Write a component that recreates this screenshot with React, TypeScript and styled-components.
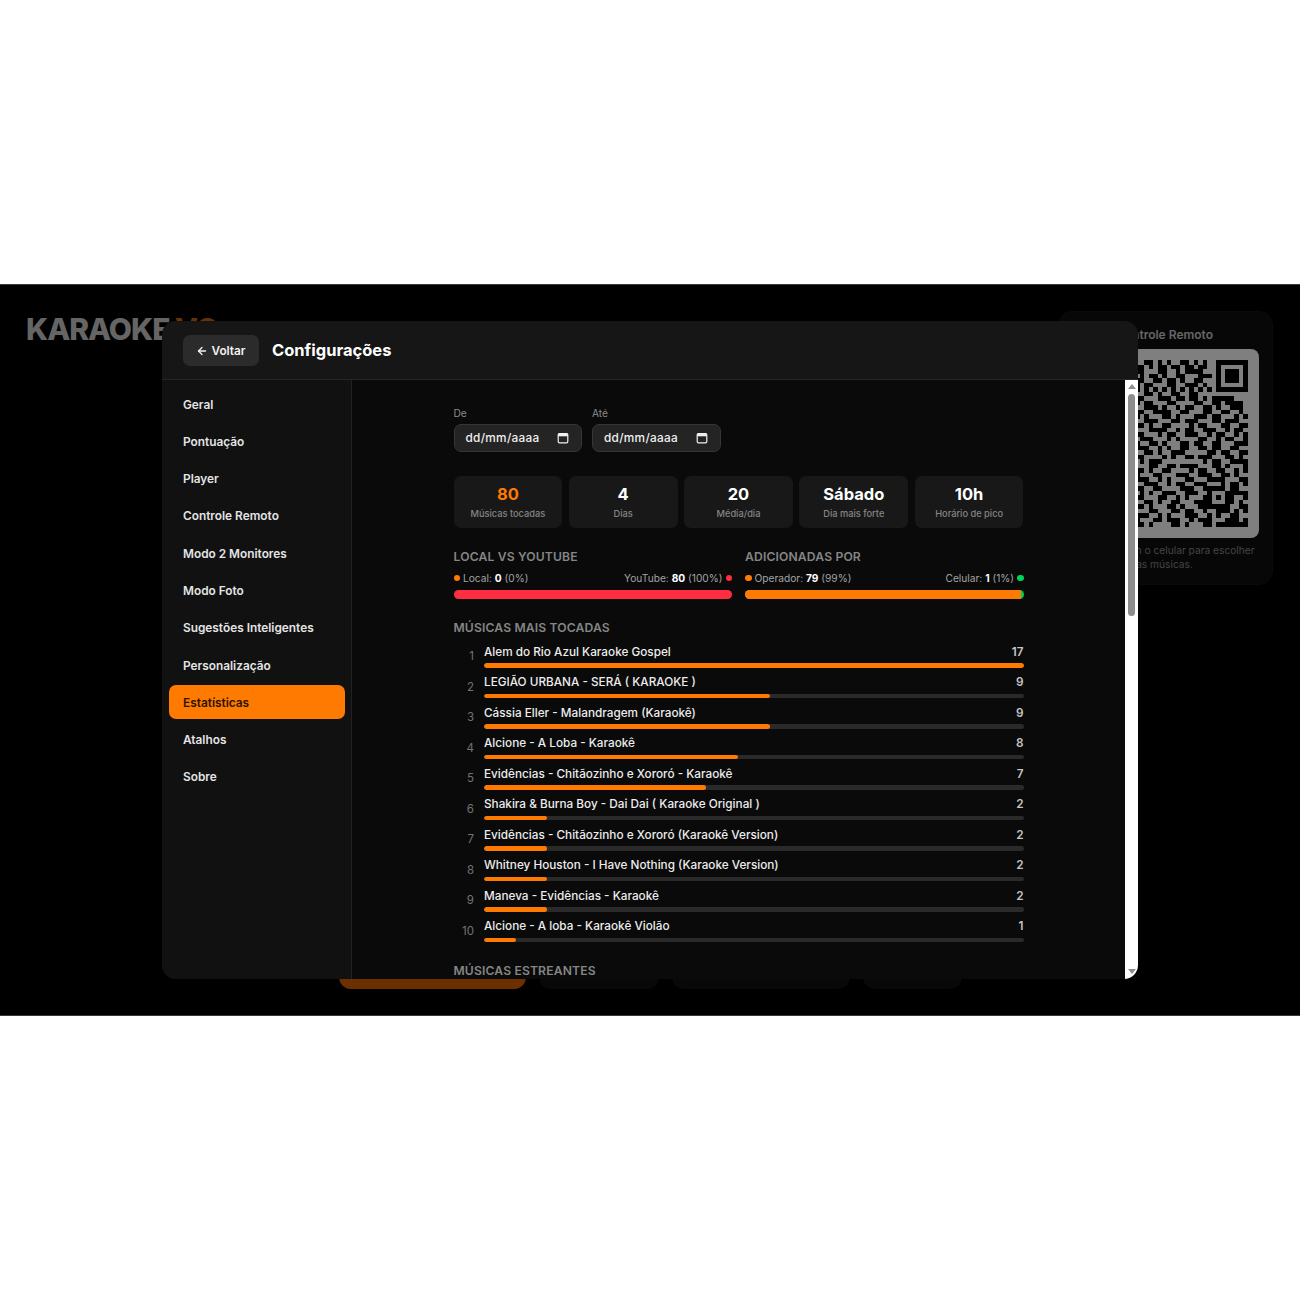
import React from "react";
import styled, { createGlobalStyle } from "styled-components";
import { ArrowLeft } from "lucide-react";

const Global = createGlobalStyle`
  * { box-sizing: border-box; }
  html, body { margin: 0; background: #fff; }
  body { font-family: Inter, "Noto Sans", sans-serif; }
`;

const Page = styled.div`
  padding-top: 284px;
  height: 1300px;
`;

const Stage = styled.main`
  position: relative;
  height: 732px;
  background: #000;
  border-top: 1px solid #3a3a3a;
  border-bottom: 1px solid #3a3a3a;
  display: flex;
  flex-direction: column;
  overflow: hidden;
  padding: 26px 27px;
`;

const TopRow = styled.div`
  display: flex;
  justify-content: space-between;
  align-items: flex-start;
`;

const Logo = styled.div`
  font-size: 30px;
  font-weight: 800;
  letter-spacing: -1px;
  line-height: 36px;
  margin-left: -1px;
  color: #cacaca;
  span { color: #d86200; }
`;

const RemotePanel = styled.aside`
  width: 215px;
  height: 274px;
  border-radius: 14px;
  background: #0e0e0e;
  border: 1px solid #141414;
  padding: 15px 14px 0 12px;
  display: flex;
  flex-direction: column;
  align-items: center;
`;

const RemoteTitle = styled.div`
  font-size: 12px;
  line-height: 15px;
  font-weight: 600;
  color: #ccc;
`;

const QrBox = styled.div`
  width: 188px;
  height: 189px;
  margin-top: 7px;
  background: #fff;
  border-radius: 8px;
  padding: 11px 11px 11px 10px;
  svg { display: block; width: 167px; height: 167px; }
`;

const RemoteCaption = styled.p`
  margin: 5px 0 0;
  font-size: 10.2px;
  line-height: 14px;
  text-align: center;
  color: #888;
  width: 188px;
`;

const BottomRow = styled.div`
  margin-top: auto;
  display: flex;
  justify-content: center;
  gap: 13px;
`;

const BottomButton = styled.div<{ $w: number; $primary?: boolean }>`
  width: ${(p) => p.$w}px;
  height: 42px;
  border-radius: 12px;
  background: ${(p) => (p.$primary ? "#d85f00" : "#111")};
`;

const Overlay = styled.div`
  position: absolute;
  inset: 0;
  background: rgba(0, 0, 0, 0.5);
  display: flex;
  align-items: center;
  justify-content: center;
`;

const Modal = styled.section`
  width: 976px;
  height: 658px;
  border-radius: 14px;
  background: #111;
  overflow: hidden;
  display: flex;
  flex-direction: column;
`;

const ModalHeader = styled.header`
  flex: 0 0 59px;
  display: flex;
  align-items: center;
  gap: 13px;
  padding: 0 21px;
  background: #161616;
  border-bottom: 1px solid #262626;
`;

const BackButton = styled.button`
  width: 76px;
  height: 31px;
  border: 0;
  border-radius: 7px;
  background: #2b2b2b;
  color: #f2f2f2;
  font: 600 11.8px Inter, sans-serif;
  display: flex;
  align-items: center;
  justify-content: center;
  gap: 3px;
  padding: 1px 0 0;
`;

const Title = styled.h1`
  margin: 0;
  font-size: 16.5px;
  font-weight: 700;
  color: #fff;
`;

const ModalBody = styled.div`
  flex: 1;
  min-height: 0;
  display: flex;
`;

const Sidebar = styled.nav`
  flex: 0 0 190px;
  padding: 7px 6px 7px 7px;
  display: flex;
  flex-direction: column;
  gap: 3.3px;
  background: #111;
  border-right: 1px solid #222;
`;

const NavItem = styled.div<{ $active?: boolean }>`
  height: 34px;
  flex: 0 0 34px;
  border-radius: 7px;
  padding: 1px 0 0 14px;
  display: flex;
  align-items: center;
  font-size: 11.85px;
  font-weight: 600;
  color: ${(p) => (p.$active ? "#2a1400" : "#e4e4e4")};
  background: ${(p) => (p.$active ? "#ff7a00" : "transparent")};
`;

const Content = styled.div`
  flex: 1;
  min-width: 0;
  overflow: hidden;
  background: #0a0a0a;
`;

const ScrollBar = styled.div`
  flex: 0 0 13px;
  background: #fff;
  display: flex;
  flex-direction: column;
  align-items: center;
  padding: 4px 0 5px;
`;

const ScrollArrow = styled.i<{ $down?: boolean }>`
  width: 0;
  height: 0;
  border-left: 4px solid transparent;
  border-right: 4px solid transparent;
  ${(p) => (p.$down ? "border-top: 5px solid #8d8d8d; margin-top: auto;" : "border-bottom: 5px solid #8d8d8d;")}
`;

const ScrollThumb = styled.div`
  width: 7.5px;
  height: 222px;
  margin-top: 5px;
  border-radius: 4px;
  background: #8d8d8d;
`;

const Inner = styled.div`
  width: 570px;
  margin: 0 auto;
  padding-top: 26.5px;
`;

const DateRow = styled.div`
  display: flex;
  gap: 10px;
`;

const DateGroup = styled.label`
  display: flex;
  flex-direction: column;
  gap: 4.5px;
`;

const DateLabel = styled.span`
  font-size: 10.2px;
  line-height: 13px;
  color: #8a8a8a;
`;

const DateField = styled.div`
  width: 128.5px;
  height: 28px;
  background: #242424;
  border: 1px solid #363636;
  border-radius: 7px;
  padding: 0 12px 0 11px;
  display: flex;
  align-items: center;
  justify-content: space-between;
  font-size: 11.8px;
  font-weight: 500;
  letter-spacing: 0.3px;
  color: #f0f0f0;
`;

const StatGrid = styled.div`
  margin-top: 23.5px;
  display: grid;
  grid-template-columns: repeat(5, 1fr);
  gap: 6.6px;
`;

const StatCard = styled.div`
  height: 52px;
  background: #181818;
  border-radius: 7px;
  display: flex;
  flex-direction: column;
  align-items: center;
  padding-top: 8px;
`;

const StatValue = styled.div<{ $accent?: boolean }>`
  font-size: 16.5px;
  line-height: 21px;
  font-weight: 700;
  color: ${(p) => (p.$accent ? "#ff7a00" : "#fff")};
`;

const StatLabel = styled.div`
  font-size: 9.25px;
  line-height: 12px;
  margin-top: 3px;
  color: #858585;
  font-weight: 500;
`;

const SplitRow = styled.div`
  margin-top: 21px;
  display: grid;
  grid-template-columns: 1fr 1fr;
  gap: 13px;
`;

const SectionTitle = styled.h2<{ $gap?: number }>`
  margin: ${(p) => p.$gap ?? 0}px 0 0;
  font-size: 12.15px;
  line-height: 15px;
  font-weight: 600;
  letter-spacing: 0.15px;
  color: #858585;
`;

const Legend = styled.div`
  margin-top: 7.5px;
  display: flex;
  justify-content: space-between;
  font-size: 10.2px;
  line-height: 14px;
  color: #a2a2a2;
  b { color: #fff; font-weight: 700; }
`;

const LegendSide = styled.span`
  display: flex;
  align-items: center;
  gap: 3px;
  white-space: pre;
`;

const Dot = styled.i<{ $c: string }>`
  width: 6.5px;
  height: 6.5px;
  border-radius: 50%;
  background: ${(p) => p.$c};
`;

const SplitBar = styled.div<{ $c: string }>`
  margin-top: 5px;
  height: 8.5px;
  border-radius: 5px;
  overflow: hidden;
  background: ${(p) => p.$c};
  display: flex;
`;

const SplitFill = styled.div<{ $c: string }>`
  height: 100%;
  background: ${(p) => p.$c};
`;

const RankList = styled.ol`
  list-style: none;
  margin: 9px 0 0;
  padding: 0;
  display: flex;
  flex-direction: column;
  gap: 7px;
`;

const RankRow = styled.li`
  display: grid;
  grid-template-columns: 20.5px 1fr;
  column-gap: 10px;
  align-items: center;
  height: 23.5px;
`;

const RankNumber = styled.span`
  font-size: 11.5px;
  text-align: right;
  padding-top: 1px;
  color: #737373;
`;

const RankMain = styled.div`
  min-width: 0;
`;

const RankHead = styled.div`
  display: flex;
  justify-content: space-between;
  font-size: 11.75px;
  line-height: 17px;
  font-weight: 500;
  color: #ededed;
`;

const RankCount = styled.span`
  font-weight: 600;
  color: #c4c4c4;
`;

const RankTrack = styled.div`
  margin-top: 2.5px;
  height: 4.5px;
  border-radius: 3px;
  background: #2a2a2a;
  overflow: hidden;
`;

const RankFill = styled.div`
  height: 100%;
  border-radius: 3px;
  background: #ff7a00;
`;

const nav = [
  "Geral", "Pontuação", "Player", "Controle Remoto", "Modo 2 Monitores", "Modo Foto",
  "Sugestões Inteligentes", "Personalização", "Estatísticas", "Atalhos", "Sobre",
];

const stats = [
  ["80", "Músicas tocadas"], ["4", "Dias"], ["20", "Média/dia"], ["Sábado", "Dia mais forte"], ["10h", "Horário de pico"],
];

const songs: [string, number][] = [
  ["Alem do Rio Azul Karaoke Gospel", 17],
  ["LEGIÃO URBANA - SERÁ ( KARAOKE )", 9],
  ["Cássia Eller - Malandragem (Karaokê)", 9],
  ["Alcione - A Loba - Karaokê", 8],
  ["Evidências - Chitãozinho e Xororó - Karaokê", 7],
  ["Shakira & Burna Boy - Dai Dai ( Karaoke Original )", 2],
  ["Evidências - Chitãozinho e Xororó (Karaokê Version)", 2],
  ["Whitney Houston - I Have Nothing (Karaoke Version)", 2],
  ["Maneva - Evidências - Karaokê", 2],
  ["Alcione - A loba - Karaokê Violão", 1],
];

// QR modules for columns 12..36; the columns to the left are covered by the dialog.
const qrRows = [
  "0011010100110101001111111",
  "1101011011011011001000001",
  "1100011001011110001011101",
  "0101101001100011101011101",
  "1100110110100110001011101",
  "1011000110011101001000001",
  "1010101010101010101111111",
  "0011010011001100000000000",
  "1100011101101101011111000",
  "1011000110000110011011110",
  "0011101001011001101001110",
  "1100111100110001100110010",
  "1010001101000111011000101",
  "0011100011011100011011100",
  "1101001100001011000110011",
  "0001111001011001110010110",
  "1100010110011100101100101",
  "0111000101000011001011001",
  "1001101000110110011000111",
  "1110010100110011011001100",
  "0011010011100000110110011",
  "1100001010011011100011010",
  "0101110000000001011001111",
  "0001100110111100011010001",
  "1101001100001011001100101",
  "1000110001110011100110100",
  "1110010100011000111100011",
  "0011100101100111000101101",
  "1100110000111001111101100",
  "0101001110011100100011111",
  "1100011001010001101011001",
  "0011010011000111100011010",
  "1101000110100011111110011",
  "0001100011011001001110101",
  "1110010100011100101001100",
  "1000110111001011100011101",
  "1101000011010001101111111",
];

const QrCode = () => (
  <svg viewBox="0 0 37 37" shapeRendering="crispEdges" aria-hidden="true">
    {qrRows.map((row, r) =>
      row.split("").map((cell, c) =>
        cell === "1" ? <rect key={`${r}-${c}`} x={c + 12} y={r} width={1} height={1} fill="#000" /> : null,
      ),
    )}
  </svg>
);

const CalendarIcon = () => (
  <svg width="12" height="12" viewBox="0 0 12 12" aria-hidden="true">
    <rect x="1.2" y="1.5" width="9.6" height="9.3" rx="1.3" fill="none" stroke="#f0f0f0" strokeWidth="1.2" />
    <rect x="1.2" y="1.5" width="9.6" height="2.8" fill="#f0f0f0" />
  </svg>
);

export default function App() {
  return (
    <Page>
      <Global />
      <Stage>
        <TopRow>
          <Logo>KARAOKE <span>VO</span></Logo>
          <RemotePanel>
            <RemoteTitle>Controle Remoto</RemoteTitle>
            <QrBox><QrCode /></QrBox>
            <RemoteCaption>Escaneie com o celular para escolher as músicas.</RemoteCaption>
          </RemotePanel>
        </TopRow>
        <BottomRow>
          <BottomButton $w={187} $primary />
          <BottomButton $w={120} />
          <BottomButton $w={178} />
          <BottomButton $w={99} />
        </BottomRow>
        <Overlay>
          <Modal>
            <ModalHeader>
              <BackButton><ArrowLeft size={12} strokeWidth={2.6} /> Voltar</BackButton>
              <Title>Configurações</Title>
            </ModalHeader>
            <ModalBody>
              <Sidebar>
                {nav.map((n) => <NavItem key={n} $active={n === "Estatísticas"}>{n}</NavItem>)}
              </Sidebar>
              <Content>
                <Inner>
                  <DateRow>
                    <DateGroup>
                      <DateLabel>De</DateLabel>
                      <DateField>dd/mm/aaaa <CalendarIcon /></DateField>
                    </DateGroup>
                    <DateGroup>
                      <DateLabel>Até</DateLabel>
                      <DateField>dd/mm/aaaa <CalendarIcon /></DateField>
                    </DateGroup>
                  </DateRow>
                  <StatGrid>
                    {stats.map(([v, l], i) => (
                      <StatCard key={l}>
                        <StatValue $accent={i === 0}>{v}</StatValue>
                        <StatLabel>{l}</StatLabel>
                      </StatCard>
                    ))}
                  </StatGrid>
                  <SplitRow>
                    <div>
                      <SectionTitle>LOCAL VS YOUTUBE</SectionTitle>
                      <Legend>
                        <LegendSide><Dot $c="#ff7a00" /><span>Local: <b>0</b> (0%)</span></LegendSide>
                        <LegendSide><span>YouTube: <b>80</b> (100%)</span><Dot $c="#ff2d40" /></LegendSide>
                      </Legend>
                      <SplitBar $c="#ff2d40" />
                    </div>
                    <div>
                      <SectionTitle>ADICIONADAS POR</SectionTitle>
                      <Legend>
                        <LegendSide><Dot $c="#ff7a00" /><span>Operador: <b>79</b> (99%)</span></LegendSide>
                        <LegendSide><span>Celular: <b>1</b> (1%)</span><Dot $c="#00d25a" /></LegendSide>
                      </Legend>
                      <SplitBar $c="#00d25a"><SplitFill $c="#ff7a00" style={{ width: "99%" }} /></SplitBar>
                    </div>
                  </SplitRow>
                  <SectionTitle $gap={21}>MÚSICAS MAIS TOCADAS</SectionTitle>
                  <RankList>
                    {songs.map(([name, count], i) => (
                      <RankRow key={name}>
                        <RankNumber>{i + 1}</RankNumber>
                        <RankMain>
                          <RankHead>
                            <span>{name}</span>
                            <RankCount>{count}</RankCount>
                          </RankHead>
                          <RankTrack>
                            <RankFill style={{ width: `${(count / 17) * 100}%` }} />
                          </RankTrack>
                        </RankMain>
                      </RankRow>
                    ))}
                  </RankList>
                  <SectionTitle $gap={21}>MÚSICAS ESTREANTES</SectionTitle>
                </Inner>
              </Content>
              <ScrollBar>
                <ScrollArrow />
                <ScrollThumb />
                <ScrollArrow $down />
              </ScrollBar>
            </ModalBody>
          </Modal>
        </Overlay>
      </Stage>
    </Page>
  );
}
